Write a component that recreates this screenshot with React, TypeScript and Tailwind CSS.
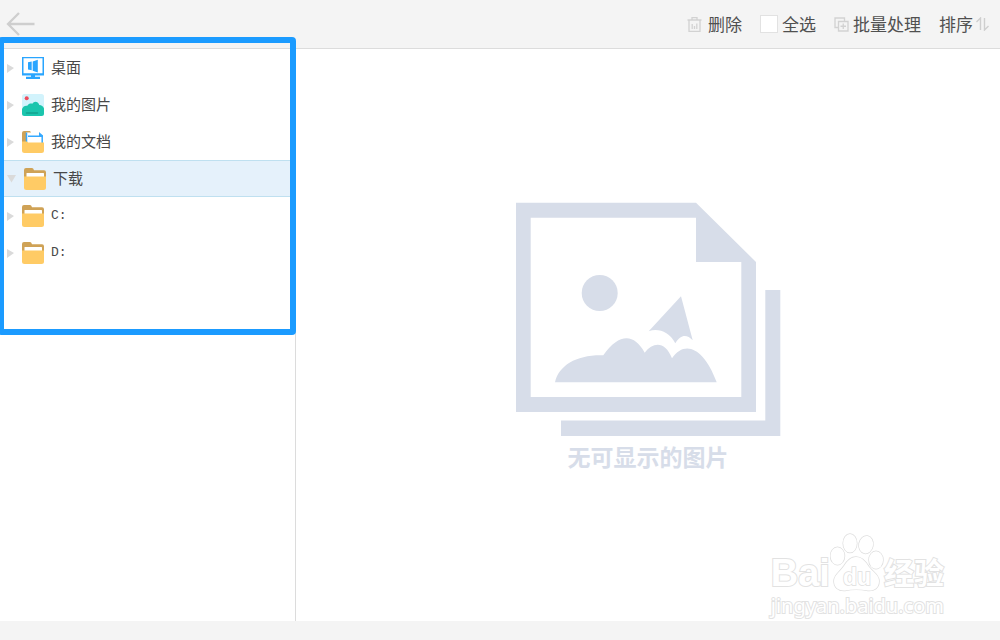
import React, { useState } from 'react';

type IconKind = 'desktop' | 'pictures' | 'documents' | 'folder';

interface TreeNode {
  id: string;
  label: string;
  icon: IconKind;
  drive?: boolean;
}

const nodes: TreeNode[] = [
  { id: 'desktop', label: '桌面', icon: 'desktop' },
  { id: 'pictures', label: '我的图片', icon: 'pictures' },
  { id: 'documents', label: '我的文档', icon: 'documents' },
  { id: 'downloads', label: '下载', icon: 'folder' },
  { id: 'c', label: 'C:', icon: 'folder', drive: true },
  { id: 'd', label: 'D:', icon: 'folder', drive: true },
];

const NodeIcon: React.FC<{ kind: IconKind }> = ({ kind }) => {
  if (kind === 'desktop') {
    return (
      <svg className="size-[22px] shrink-0" viewBox="0 0 22 22" aria-hidden="true">
        <path fill="#29a5ff" fillRule="evenodd" d="M0 0H22V18.5H0ZM1.5 1.3V16.3H20.5V1.3Z" />
        <path fill="#29a5ff" d="M6 5.3L9.7 4.6V13.2L6 12.4ZM10.7 4.4L15.8 2.8V15.5L10.7 13.7ZM9 18H13V19.8H18V22H4V19.8H9Z" />
      </svg>
    );
  }
  if (kind === 'pictures') {
    return (
      <svg className="size-[22px] shrink-0" viewBox="0 0 22 22" aria-hidden="true">
        <rect width="22" height="22" rx="2.5" fill="#d2f3fc" />
        <circle cx="4.7" cy="4.3" r="2" fill="#ee4b5c" />
        <path fill="#1bc5ad" d="M0 15C1 12.5 3 11.3 5.3 11.8C6.5 9.5 9 9.3 10.3 9.8C12 6.8 16 7 17.3 11C19.5 11 21.3 12.5 22 14.5V19.5Q22 22 19.5 22H2.5Q0 22 0 19.5Z" />
        <path stroke="#14a18e" strokeWidth="1.6" strokeLinecap="round" d="M4.5 19H15.5" />
      </svg>
    );
  }
  if (kind === 'documents') {
    return (
      <svg className="size-[22px] shrink-0" viewBox="0 0 22 22" aria-hidden="true">
        <path fill="#cfa256" d="M0 2Q0 0 2 0H8L9 1.5V14H0Z" />
        <path fill="#fff" d="M4 1.5H18L21 5V14H4Z" />
        <path fill="none" stroke="#35a9ff" strokeWidth="1.5" d="M4.5 12V1.5M6 5.3H20.2V12" />
        <path fill="#35a9ff" d="M17 1L21 4.5V6H17Z" />
        <path fill="#ffcb65" d="M0 10.5H4.5Q5.5 10.5 6 11.5H22V19.5Q22 22 19.5 22H2.5Q0 22 0 19.5Z" />
      </svg>
    );
  }
  return (
    <svg className="size-[22px] shrink-0" viewBox="0 0 22 22" aria-hidden="true">
      <path fill="#cfa256" d="M0 2Q0 0 2 0H8Q9.3 0 10 2.2H20Q22 2.2 22 4.2V12H0Z" />
      <path fill="#fff" d="M2.5 5.5Q2.5 5 3 5H19.5Q20 5 20 5.5V11H2.5Z" />
      <path fill="#ffcb65" d="M0 8.5H22V19.5Q22 22 19.5 22H2.5Q0 22 0 19.5Z" />
    </svg>
  );
};

const Toolbar: React.FC = () => {
  const [allChecked, setAllChecked] = useState(false);

  return (
    <header className="flex h-[49px] shrink-0 items-center justify-between border-b border-[#dcdcdc] bg-[#f4f4f4] pl-[6px] pr-[10px] text-[17px] leading-6 text-[#505050]">
      <button type="button" aria-label="返回">
        <svg className="h-6 w-[29px]" viewBox="0 0 29 24" fill="none" stroke="#cecece" strokeWidth="2.3" aria-hidden="true">
          <path d="M13 1L2 12L13 23M2 12H28.5" />
        </svg>
      </button>
      <div className="flex items-center gap-[18px]">
        <button type="button" className="flex items-center gap-[6px]">
          <svg className="size-[15px]" viewBox="0 0 15 15" fill="none" stroke="#d2d2d2" strokeWidth="1.3" aria-hidden="true">
            <path d="M0.5 3H14.5M5 2.8V0.7H10V2.8M2 3V14.3H13V3M5.2 7V12M7.5 9V12M9.8 6.5V12" />
          </svg>
          删除
        </button>
        <label htmlFor="select-all" className="flex items-center gap-1">
          <input
            id="select-all"
            type="checkbox"
            checked={allChecked}
            onChange={(e) => setAllChecked(e.target.checked)}
            className="size-[18px] appearance-none border border-[#e2e2e2] bg-white checked:bg-[#1e9bff]"
          />
          全选
        </label>
        <button type="button" className="flex items-center gap-1">
          <svg className="size-[15px]" viewBox="0 0 15 15" fill="none" stroke="#d2d2d2" strokeWidth="1.3" aria-hidden="true">
            <path d="M4 10.5H1V1H10.5V4M4.5 4.5H14V14H4.5ZM9.25 6.5V12M6.5 9.25H12" />
          </svg>
          批量处理
        </button>
        <button type="button" className="flex items-center gap-[3px]">
          排序
          <svg className="size-[14px]" viewBox="0 0 14 14" fill="none" stroke="#cfcfcf" strokeWidth="1.4" aria-hidden="true">
            <path d="M0.5 5L4.5 1V13M8.5 1V13L12.5 9" />
          </svg>
        </button>
      </div>
    </header>
  );
};

interface TreeProps {
  selected: string;
  onSelect: (id: string) => void;
}

const FolderTree: React.FC<TreeProps> = ({ selected, onSelect }) => (
  <nav className="w-[296px] shrink-0 border-r border-[#dcdcdc]" aria-label="文件夹">
    <ul>
      {nodes.map((node) => {
        const active = node.id === selected;
        return (
          <li key={node.id}>
            <button
              type="button"
              onClick={() => onSelect(node.id)}
              aria-expanded={active}
              className={`flex h-[37px] w-full items-center border-y text-left text-[15px] leading-5 text-[#484848] ${active ? 'border-[#bfe0f0] bg-[#e5f1fb] pl-[7px]' : 'border-transparent pl-[6px]'}`}
            >
              {active ? (
                <svg className="mr-2 h-[8px] w-[9px] shrink-0" viewBox="0 0 9 8" aria-hidden="true">
                  <path d="M0 0H9L4.5 7.5Z" fill="#dadada" />
                </svg>
              ) : (
                <svg className="mr-2 h-[10px] w-[8px] shrink-0" viewBox="0 0 8 10" aria-hidden="true">
                  <path d="M1 1L8 5L1 10Z" fill="#dadada" />
                </svg>
              )}
              <NodeIcon kind={node.icon} />
              <span className={node.drive ? 'ml-[7px] font-["Liberation_Mono",monospace] text-[13px]' : 'ml-[7px] pb-[2px]'}>
                {node.label}
              </span>
            </button>
          </li>
        );
      })}
    </ul>
  </nav>
);

const EmptyState: React.FC = () => (
  <div className="flex flex-col items-center gap-2 text-[#d7dde9]">
    <svg className="h-[234px] w-[266px]" viewBox="0 0 266 234" fill="currentColor" aria-hidden="true">
      <path fillRule="evenodd" d="M1 0.7H181L241 60V210H1ZM15.7 15.7V195H226.3V60H181V15.7Z" />
      <path d="M250.3 88H265.3V234H46V218.5H250.3Z" />
      <circle cx="84.7" cy="91" r="18" />
      <path d="M133.7 129.3L166 94.3L177.7 138.3C172 132.5 166 132 160.3 141.3C154 129.5 143 126 133.7 129.3Z" />
      <path d="M40 180.3C44 163 62 152.5 88.3 153.3C104 131 119 131 129.7 150.7C138 140 150 138.5 157 156.3C170 137.5 189 146 201.7 180.3Z" />
    </svg>
    <p className="text-[23px] font-bold leading-6">无可显示的图片</p>
  </div>
);

const Watermark: React.FC = () => (
  <div className="pointer-events-none absolute bottom-[2px] right-[56px] flex flex-col text-white [-webkit-text-stroke:2px_#e2e2e2] [paint-order:stroke_fill]">
    <div className="flex items-end font-bold">
      <span className='font-["Liberation_Sans",sans-serif] text-[38px] leading-10'>Bai</span>
      <svg className="h-[60px] w-[54px]" viewBox="0 0 54 60" fill="#fff" stroke="#dedede" strokeWidth="1.5">
        <ellipse cx="7.5" cy="23" rx="7" ry="8.7" />
        <ellipse cx="20" cy="10.3" rx="6.8" ry="9.3" />
        <ellipse cx="36" cy="11.7" rx="7" ry="8.8" transform="rotate(10 36 11.7)" />
        <ellipse cx="46" cy="27" rx="7" ry="8.7" />
        <path d="M26 24C32 24 36 29 39 34C43 39 49 42 49 48C49 55 44 58 38 57.5C30 56 22 56 15 57.5C8 58 4 54 4 48C4 42 10 39 14 33C17 28 21 24 26 24Z" />
        <text x="13" y="52" className='font-["Liberation_Sans",sans-serif] text-[23px] [paint-order:stroke_fill]'>du</text>
      </svg>
      <span className="text-[30px] leading-[44px]">经验</span>
    </div>
    <span className='font-["Noto_Sans",sans-serif] text-[20px] leading-[26px]'>jingyan.baidu.com</span>
  </div>
);

const App: React.FC = () => {
  const [selected, setSelected] = useState('downloads');

  return (
    <div className='relative flex min-h-screen flex-col overflow-hidden bg-white font-["Noto_Sans_CJK_SC",sans-serif]'>
      <Toolbar />
      <div className="flex flex-1">
        <FolderTree selected={selected} onSelect={setSelected} />
        <main className="relative flex flex-1 items-center justify-center">
          <EmptyState />
          <Watermark />
        </main>
      </div>
      <footer className="h-[19px] shrink-0 bg-[#f4f4f4]" />
      {/* highlight around the folder tree */}
      <div className="pointer-events-none absolute -left-[2px] top-[37px] h-[298px] w-[298px] rounded-[4px] border-[6px] border-[#1b9bff]" />
    </div>
  );
};

export default App;
